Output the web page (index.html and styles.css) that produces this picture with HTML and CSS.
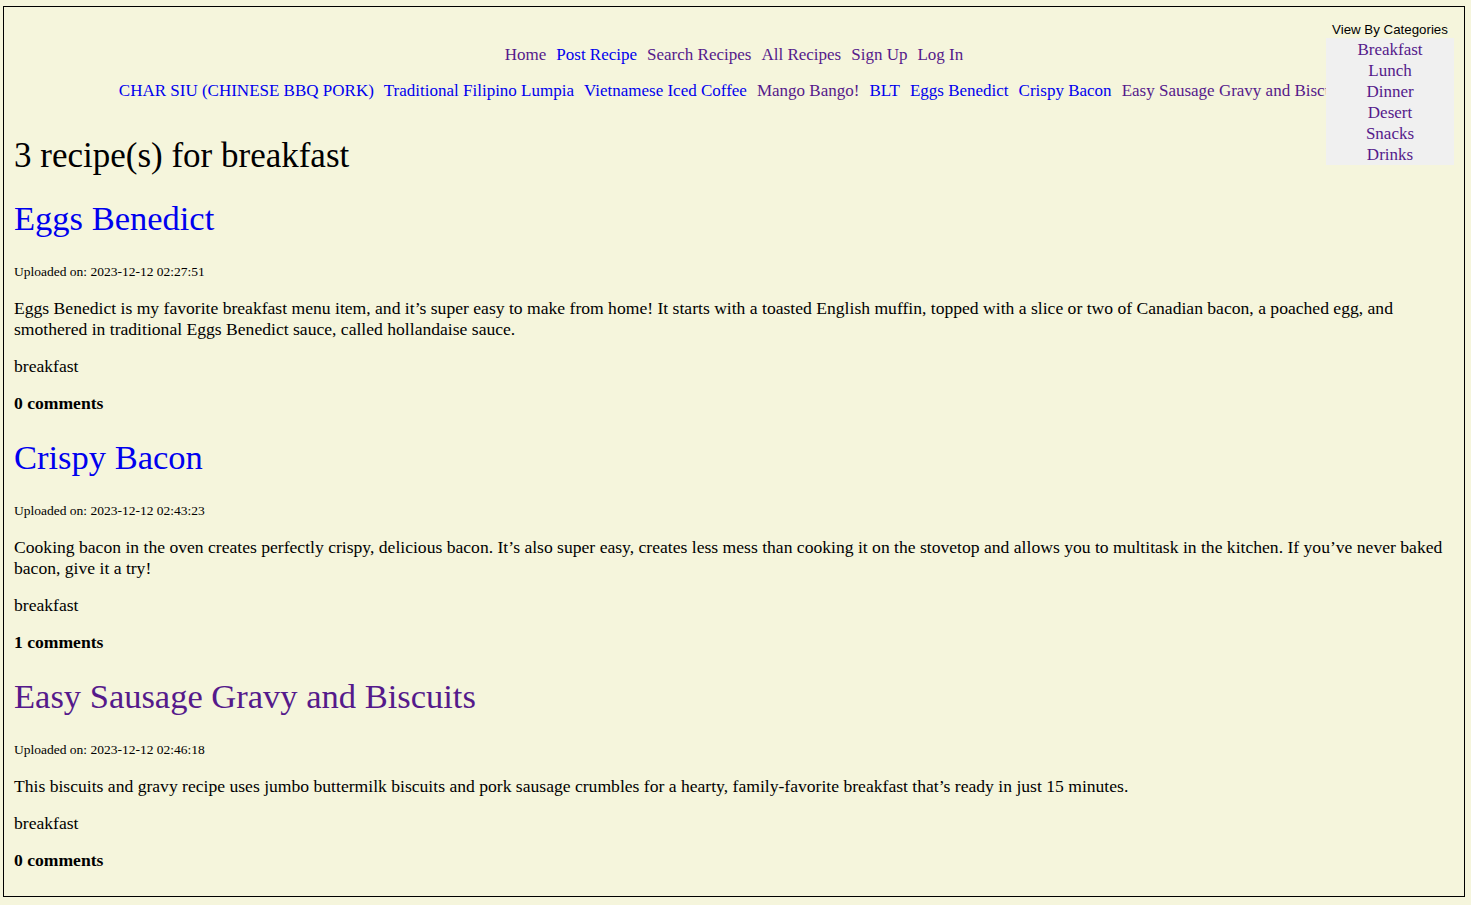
FILE: index.html
```html
<!DOCTYPE html>
<html lang="en">
<head>
<meta charset="utf-8">
<title>Breakfast recipes</title>
<link rel="stylesheet" href="styles.css">
</head>
<body>
<div class="page">
  <header class="site-header">
    <nav class="nav-row nav-main">
      <a class="visited" href="#">Home</a>
      <a href="#">Post Recipe</a>
      <a class="visited" href="#">Search Recipes</a>
      <a class="visited" href="#">All Recipes</a>
      <a class="visited" href="#">Sign Up</a>
      <a class="visited" href="#">Log In</a>
    </nav>
    <nav class="nav-row nav-recipes">
      <a href="#">CHAR SIU (CHINESE BBQ PORK)</a>
      <a href="#">Traditional Filipino Lumpia</a>
      <a href="#">Vietnamese Iced Coffee</a>
      <a class="visited" href="#">Mango Bango!</a>
      <a href="#">BLT</a>
      <a href="#">Eggs Benedict</a>
      <a href="#">Crispy Bacon</a>
      <a class="visited" href="#">Easy Sausage Gravy and Biscuits</a>
    </nav>
    <div class="categories">
      <div class="cat-label">View By Categories</div>
      <div class="cat-menu">
        <a class="visited" href="#">Breakfast</a>
        <a class="visited" href="#">Lunch</a>
        <a class="visited" href="#">Dinner</a>
        <a class="visited" href="#">Desert</a>
        <a class="visited" href="#">Snacks</a>
        <a class="visited" href="#">Drinks</a>
      </div>
    </div>
  </header>
  <main>
    <h1 class="page-title">3 recipe(s) for breakfast</h1>
    <article class="recipe">
      <h2 class="recipe-title"><a href="#">Eggs Benedict</a></h2>
      <p class="meta"><small>Uploaded on: 2023-12-12 02:27:51</small></p>
      <p>Eggs Benedict is my favorite breakfast menu item, and it’s super easy to make from home! It starts with a toasted English muffin, topped with a slice or two of Canadian bacon, a poached egg, and smothered in traditional Eggs Benedict sauce, called hollandaise sauce.</p>
      <p>breakfast</p>
      <p class="comments">0 comments</p>
    </article>
    <article class="recipe">
      <h2 class="recipe-title"><a href="#">Crispy Bacon</a></h2>
      <p class="meta"><small>Uploaded on: 2023-12-12 02:43:23</small></p>
      <p>Cooking bacon in the oven creates perfectly crispy, delicious bacon. It’s also super easy, creates less mess than cooking it on the stovetop and allows you to multitask in the kitchen. If you’ve never baked bacon, give it a try!</p>
      <p>breakfast</p>
      <p class="comments">1 comments</p>
    </article>
    <article class="recipe">
      <h2 class="recipe-title"><a class="visited" href="#">Easy Sausage Gravy and Biscuits</a></h2>
      <p class="meta"><small>Uploaded on: 2023-12-12 02:46:18</small></p>
      <p>This biscuits and gravy recipe uses jumbo buttermilk biscuits and pork sausage crumbles for a hearty, family-favorite breakfast that’s ready in just 15 minutes.</p>
      <p>breakfast</p>
      <p class="comments">0 comments</p>
    </article>
  </main>
</div>
</body>
</html>
```
FILE: styles.css
```css
html, body {
  margin: 0;
  padding: 0;
  background: #f5f5dc;
}

body {
  font-family: "Liberation Serif", "Times New Roman", serif;
  font-size: 17.6px;
  color: #000;
}

a {
  color: #0000ee;
  text-decoration: none;
}

a.visited {
  color: #551a8b;
}

.page {
  position: relative;
  margin: 6px 6px 8px 3px;
  padding: 10px 10px 9px;
  border: 1px solid #000;
}

.site-header {
  padding-top: 27px;
}

.nav-row {
  display: flex;
  justify-content: center;
  gap: 10px;
  font-size: 17px;
  line-height: 21px;
  white-space: nowrap;
}

.nav-recipes {
  margin-top: 15px;
}

.categories {
  position: absolute;
  top: 14px;
  right: 10px;
  width: 128px;
  text-align: center;
}

.cat-label {
  font-family: "Liberation Sans", Arial, sans-serif;
  font-size: 13.3px;
  line-height: 17px;
}

.cat-menu {
  display: flex;
  flex-direction: column;
  background: #f0f0f0;
  padding-top: 1px;
}

.cat-menu a {
  font-size: 17px;
  line-height: 21px;
}

.page-title {
  font-size: 35px;
  font-weight: normal;
  line-height: 39px;
  margin: 35px 0 0;
}

.recipe-title {
  font-size: 34.5px;
  font-weight: normal;
  line-height: 43px;
  margin: 22px 0 20px;
}

.recipe p {
  line-height: 21px;
  margin: 16px 0;
}

.recipe p.meta {
  margin-top: 0;
}

.meta small {
  font-size: 13.5px;
}

.comments {
  font-weight: bold;
}
```
